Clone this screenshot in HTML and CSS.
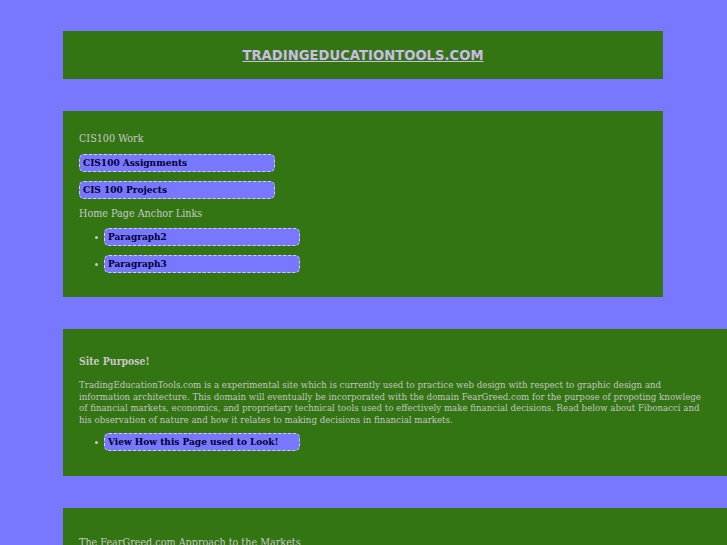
FILE: index.html
```html
<!DOCTYPE html>
<html>
<head>
<meta charset="utf-8">
<link rel="stylesheet" href="styles.css">
</head>
<body>
<div class="page">
  <header class="panel header">
    <a class="site-title" href="#">TRADINGEDUCATIONTOOLS.COM</a>
  </header>

  <section class="panel nav">
    <h3 class="label">CIS100 Work</h3>
    <a class="btn" href="#">CIS100 Assignments</a>
    <a class="btn" href="#">CIS 100 Projects</a>
    <h3 class="label">Home Page Anchor Links</h3>
    <ul class="links">
      <li><a class="btn" href="#">Paragraph2</a></li>
      <li><a class="btn" href="#">Paragraph3</a></li>
    </ul>
  </section>

  <section class="panel wide purpose">
    <h3 class="label strong">Site Purpose!</h3>
    <p class="text">TradingEducationTools.com is a experimental site which is currently used to practice web design with respect to graphic design and information architecture. This domain will eventually be incorporated with the domain FearGreed.com for the purpose of propoting knowlege of financial markets, economics, and proprietary technical tools used to effectively make financial decisions. Read below about Fibonacci and his observation of nature and how it relates to making decisions in financial markets.</p>
    <ul class="links">
      <li><a class="btn" href="#">View How this Page used to Look!</a></li>
    </ul>
  </section>

  <section class="panel wide approach">
    <h3 class="label">The FearGreed.com Approach to the Markets</h3>
  </section>
</div>
</body>
</html>
```

FILE: styles.css
```css
html, body {
  margin: 0;
  padding: 0;
  background: #7878ff;
  overflow: hidden;
}
body {
  font-family: "DejaVu Serif Condensed", "DejaVu Serif", serif;
  color: #c8c8c8;
  height: 545px;
}
.page {
  padding: 31px 0 0 63px;
  display: flex;
  flex-direction: column;
  gap: 32px;
  align-items: flex-start;
}
.panel {
  background: #337513;
  width: 600px;
  box-sizing: border-box;
  padding: 16px;
}
.panel.wide {
  width: 664px;
}
.header {
  height: 48px;
  display: flex;
  align-items: center;
  justify-content: center;
  padding: 0;
}
.site-title {
  font-family: "DejaVu Sans", sans-serif;
  font-weight: bold;
  font-size: 13.2px;
  color: #cbbbe6;
  text-decoration: underline;
}
.label {
  font-size: 10.7px;
  font-weight: normal;
  margin: 0;
  line-height: 14px;
  color: #c8c8c8;
}
.label.strong { font-weight: 600; font-size: 10.4px; }
.nav {
  height: 186px;
  padding-top: 21px;
}
.nav .label + .btn { margin-top: 8px; }
.btn {
  display: block;
  width: 196px;
  box-sizing: border-box;
  height: 18px;
  line-height: 16px;
  padding: 0 3px;
  background: #7878ff;
  border: 1px dashed #d0d0e8;
  border-radius: 5px;
  color: #000033;
  font-weight: bold;
  font-size: 10px;
  text-decoration: none;
}
.nav .btn + .btn { margin-top: 9px; }
.nav .btn + .label { margin-top: 8px; }
.links {
  margin: 7px 0 0;
  padding-left: 16px;
  list-style: none;
  font-size: 10px;
  line-height: 18px;
}
.links li {
  display: flex;
  align-items: center;
  gap: 6px;
}
.links li::before {
  content: "";
  width: 3px;
  height: 3px;
  border-radius: 50%;
  background: #c8c8c8;
  flex: none;
}
.links li + li { margin-top: 9px; }
.text {
  font-size: 9.6px;
  line-height: 11.5px;
  margin: 11px 0 0;
  font-weight: normal;
  color: #c4c4c4;
}
.purpose {
  height: 147px;
  padding-top: 25px;
}
.purpose .links { margin-top: 8px; }
.approach {
  height: 100px;
  padding-top: 28px;
}
```
